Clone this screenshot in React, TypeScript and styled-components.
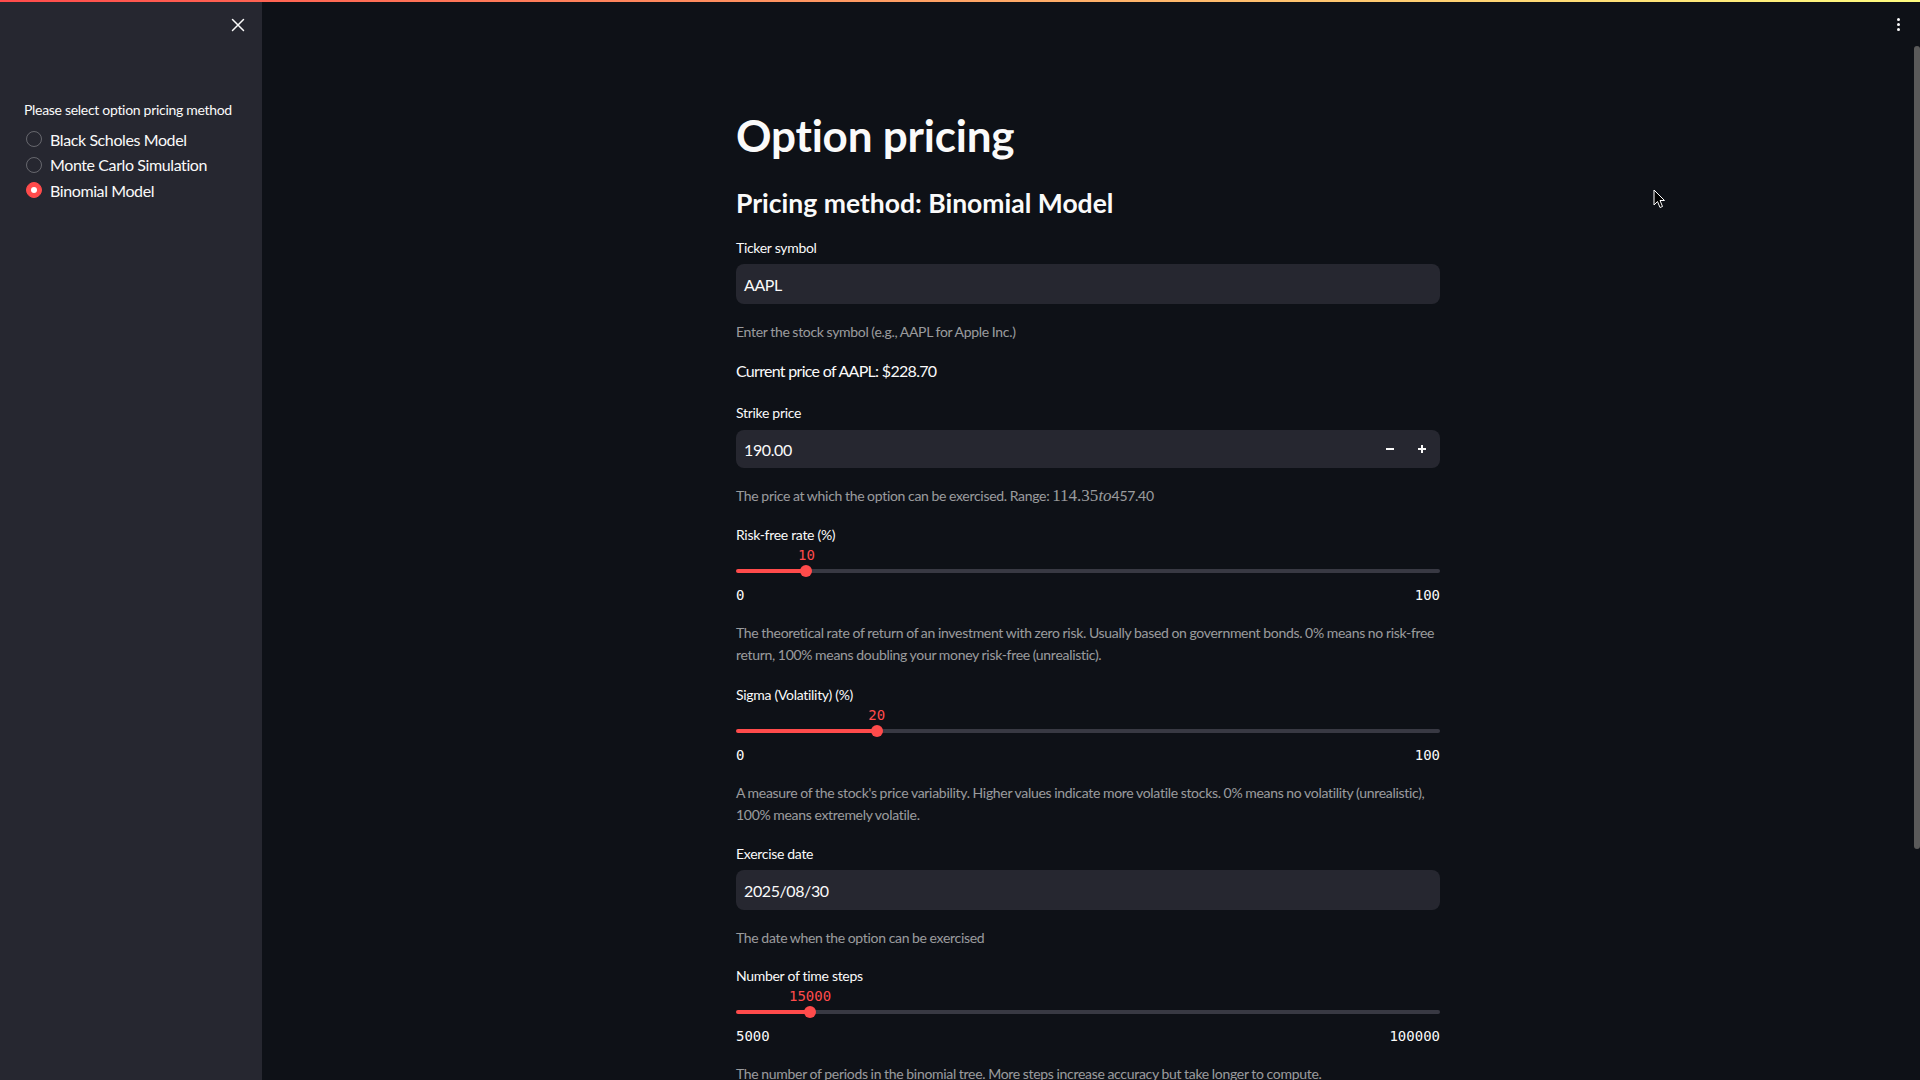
import React from "react";
import styled, { createGlobalStyle } from "styled-components";

const GlobalStyle = createGlobalStyle`
    html, body {
        margin: 0;
        padding: 0;
        height: 100%;
        background: #0e1117;
        overflow: hidden;
    }

    body {
        font-family: Lato, "Noto Sans", sans-serif;
        color: #fafafa;
        -webkit-font-smoothing: antialiased;
    }

    *, *::before, *::after {
        box-sizing: border-box;
    }
`

const AppLayer = styled.div`
    display: flex;
    height: 100vh;
    position: relative;
`

const TopDecoration = styled.div`
    position: absolute;
    top: 0;
    left: 0;
    right: 0;
    height: 2px;
    background: linear-gradient(90deg, #ff4b4b, #fffd80);
    z-index: 10;
`

const Sidebar = styled.aside`
    width: 262px;
    flex-shrink: 0;
    background: #262730;
    display: flex;
    flex-direction: column;
`

const SidebarHeader = styled.div`
    height: 50px;
    display: flex;
    align-items: center;
    justify-content: flex-end;
    padding-right: 12px;
`

const CloseButton = styled.button`
    width: 24px;
    height: 24px;
    padding: 0;
    border: none;
    background: none;
    color: #fafafa;
    display: flex;
    align-items: center;
    justify-content: center;
`

const SidebarBody = styled.div`
    padding: 50px 24px 0;
`

const SidebarLabel = styled.div`
    font-size: 14px;
    line-height: 20px;
    letter-spacing: -0.3px;
    white-space: nowrap;
`

const RadioGroup = styled.div`
    margin-top: 7px;
    display: flex;
    flex-direction: column;
    gap: 1.5px;
`

const RadioRow = styled.label`
    display: flex;
    align-items: center;
    gap: 8px;
    height: 24px;
    padding-left: 2px;
    font-size: 16px;
    letter-spacing: -0.4px;
`

const RadioDot = styled.span<{ $checked: boolean }>`
    width: 16px;
    height: 16px;
    border-radius: 50%;
    border: 1px solid ${p => p.$checked ? "#ff4b4b" : "rgba(250, 250, 250, 0.3)"};
    background: ${p => p.$checked ? "#ff4b4b" : "transparent"};
    display: flex;
    align-items: center;
    justify-content: center;

    &::after {
        content: "";
        width: 6px;
        height: 6px;
        border-radius: 50%;
        background: #ffffff;
        display: ${p => p.$checked ? "block" : "none"};
    }
`

const Main = styled.main`
    flex: 1;
    position: relative;
    padding-right: 6px;
`

const Toolbar = styled.div`
    position: absolute;
    top: 12px;
    right: 10px;
    width: 24px;
    height: 24px;
    display: flex;
    flex-direction: column;
    align-items: center;
    justify-content: center;
    gap: 2px;

    span {
        width: 3px;
        height: 3px;
        border-radius: 50%;
        background: #fafafa;
    }
`

const ScrollThumb = styled.div`
    position: absolute;
    top: 46px;
    right: 0;
    width: 6px;
    height: 803px;
    border-radius: 3px;
    background: #5a5a5a;
`

const Cursor = styled.svg`
    position: absolute;
    left: 1391px;
    top: 189px;
`

const Block = styled.div`
    width: 704px;
    margin: 0 auto;
    padding-top: 109px;
    display: flex;
    flex-direction: column;
`

const Title = styled.h1`
    margin: 0;
    font-size: 44px;
    line-height: 52px;
    font-weight: 700;
    letter-spacing: -0.2px;
`

const Subheader = styled.h3`
    margin: 24px 0 0;
    font-size: 26.5px;
    line-height: 36px;
    font-weight: 700;
`

const WidgetLabel = styled.div<{ $mt: number }>`
    margin-top: ${p => p.$mt}px;
    font-size: 14px;
    line-height: 20px;
    letter-spacing: -0.3px;
`

const InputBox = styled.div`
    margin-top: 6px;
    height: 40px;
    background: #262730;
    border-radius: 8px;
    display: flex;
    align-items: center;
    padding-left: 8px;
    font-size: 16px;
    letter-spacing: -0.4px;
`

const NumberBox = styled(InputBox)`
    margin-top: 7px;
    height: 38px;
    padding-right: 2px;
`

const NumberValue = styled.div`
    flex: 1;
`

const StepButton = styled.button`
    width: 32px;
    height: 100%;
    padding: 0;
    border: none;
    background: none;
    color: #fafafa;
    display: flex;
    align-items: center;
    justify-content: center;
`

const Help = styled.div`
    margin-top: 17px;
    font-size: 14px;
    line-height: 22px;
    letter-spacing: -0.3px;
    word-spacing: -0.4px;
    color: rgba(250, 250, 250, 0.6);
`

const MathInline = styled.span`
    font-family: "Liberation Serif", "DejaVu Serif", serif;
    font-size: 17px;
    letter-spacing: 0;

    i {
        font-style: italic;
    }
`

const Paragraph = styled.p`
    margin: 16px 0 0;
    font-size: 16px;
    line-height: 24px;
    letter-spacing: -0.7px;
`

const SliderLayer = styled.div`
    display: flex;
    flex-direction: column;
    font-family: "DejaVu Sans Mono", "Liberation Mono", monospace;
    font-size: 14px;
`

const ValueRow = styled.div`
    position: relative;
    height: 20px;
`

const ThumbValue = styled.span`
    position: absolute;
    top: 0;
    line-height: 20px;
    color: #ff4b4b;
    transform: translateX(-50%);
`

const TrackRow = styled.div`
    position: relative;
    height: 12px;
    display: flex;
    align-items: center;
`

const Rail = styled.div`
    width: 100%;
    height: 4px;
    border-radius: 2px;
`

const Thumb = styled.div`
    position: absolute;
    top: 0;
    width: 12px;
    height: 12px;
    border-radius: 50%;
    background: #ff4b4b;
    transform: translateX(-50%);
`

const TickBar = styled.div`
    margin-top: 8px;
    display: flex;
    justify-content: space-between;
    line-height: 20px;
    color: #fafafa;
`

function Slider({value, min, max}: { value: number, min: number, max: number }) {
    const pct = (value - min) / (max - min) * 100

    return (
        <SliderLayer>
            <ValueRow>
                <ThumbValue style={{left: `${pct}%`}}>{value}</ThumbValue>
            </ValueRow>
            <TrackRow>
                <Rail style={{background: `linear-gradient(90deg, #ff4b4b 0 ${pct}%, #383943 ${pct}% 100%)`}}/>
                <Thumb style={{left: `${pct}%`}}/>
            </TrackRow>
            <TickBar>
                <span>{min}</span>
                <span>{max}</span>
            </TickBar>
        </SliderLayer>
    )
}

const methods = ["Black Scholes Model", "Monte Carlo Simulation", "Binomial Model"]

function App() {
    return (
        <AppLayer>
            <GlobalStyle/>
            <TopDecoration/>
            <Sidebar>
                <SidebarHeader>
                    <CloseButton>
                        <svg width="14" height="14" viewBox="0 0 14 14" fill="none" stroke="currentColor" strokeWidth="1.5" strokeLinecap="round">
                            <path d="M1.5 1.5 12.5 12.5M12.5 1.5 1.5 12.5"/>
                        </svg>
                    </CloseButton>
                </SidebarHeader>
                <SidebarBody>
                    <SidebarLabel>Please select option pricing method</SidebarLabel>
                    <RadioGroup>
                        {methods.map(m => (
                            <RadioRow key={m}>
                                <RadioDot $checked={m === "Binomial Model"}/>
                                {m}
                            </RadioRow>
                        ))}
                    </RadioGroup>
                </SidebarBody>
            </Sidebar>
            <Main>
                <Toolbar>
                    <span/>
                    <span/>
                    <span/>
                </Toolbar>
                <ScrollThumb/>
                <Cursor width="13" height="20" viewBox="0 0 13 20">
                    <path d="M1 1 L1 16 L4.5 12.5 L7 18.5 L9.5 17.5 L7 11.5 L11.5 11.5 Z" fill="#000" stroke="#fff" strokeWidth="1"/>
                </Cursor>
                <Block>
                    <Title>Option pricing</Title>
                    <Subheader>Pricing method: Binomial Model</Subheader>

                    <WidgetLabel $mt={17}>Ticker symbol</WidgetLabel>
                    <InputBox>AAPL</InputBox>
                    <Help>Enter the stock symbol (e.g., AAPL for Apple Inc.)</Help>

                    <Paragraph>Current price of AAPL: $228.70</Paragraph>

                    <WidgetLabel $mt={20}>Strike price</WidgetLabel>
                    <NumberBox>
                        <NumberValue>190.00</NumberValue>
                        <StepButton>
                            <svg width="10" height="10" viewBox="0 0 10 10" stroke="currentColor" strokeWidth="2">
                                <path d="M1 5h8"/>
                            </svg>
                        </StepButton>
                        <StepButton>
                            <svg width="10" height="10" viewBox="0 0 10 10" stroke="currentColor" strokeWidth="2">
                                <path d="M1 5h8M5 1v8"/>
                            </svg>
                        </StepButton>
                    </NumberBox>
                    <Help>
                        The price at which the option can be exercised. Range: <MathInline>114.35<i>to</i></MathInline>457.40
                    </Help>

                    <WidgetLabel $mt={18}>Risk-free rate (%)</WidgetLabel>
                    <Slider value={10} min={0} max={100}/>
                    <Help>
                        The theoretical rate of return of an investment with zero risk. Usually based on government bonds. 0% means no risk-free return, 100% means doubling your money risk-free (unrealistic).
                    </Help>

                    <WidgetLabel $mt={19}>Sigma (Volatility) (%)</WidgetLabel>
                    <Slider value={20} min={0} max={100}/>
                    <Help>
                        A measure of the stock's price variability. Higher values indicate more volatile stocks. 0% means no volatility (unrealistic), 100% means extremely volatile.
                    </Help>

                    <WidgetLabel $mt={18}>Exercise date</WidgetLabel>
                    <InputBox>2025/08/30</InputBox>
                    <Help>The date when the option can be exercised</Help>

                    <WidgetLabel $mt={17}>Number of time steps</WidgetLabel>
                    <Slider value={15000} min={5000} max={100000}/>
                    <Help>
                        The number of periods in the binomial tree. More steps increase accuracy but take longer to compute.
                    </Help>
                </Block>
            </Main>
        </AppLayer>
    )
}

export default App
